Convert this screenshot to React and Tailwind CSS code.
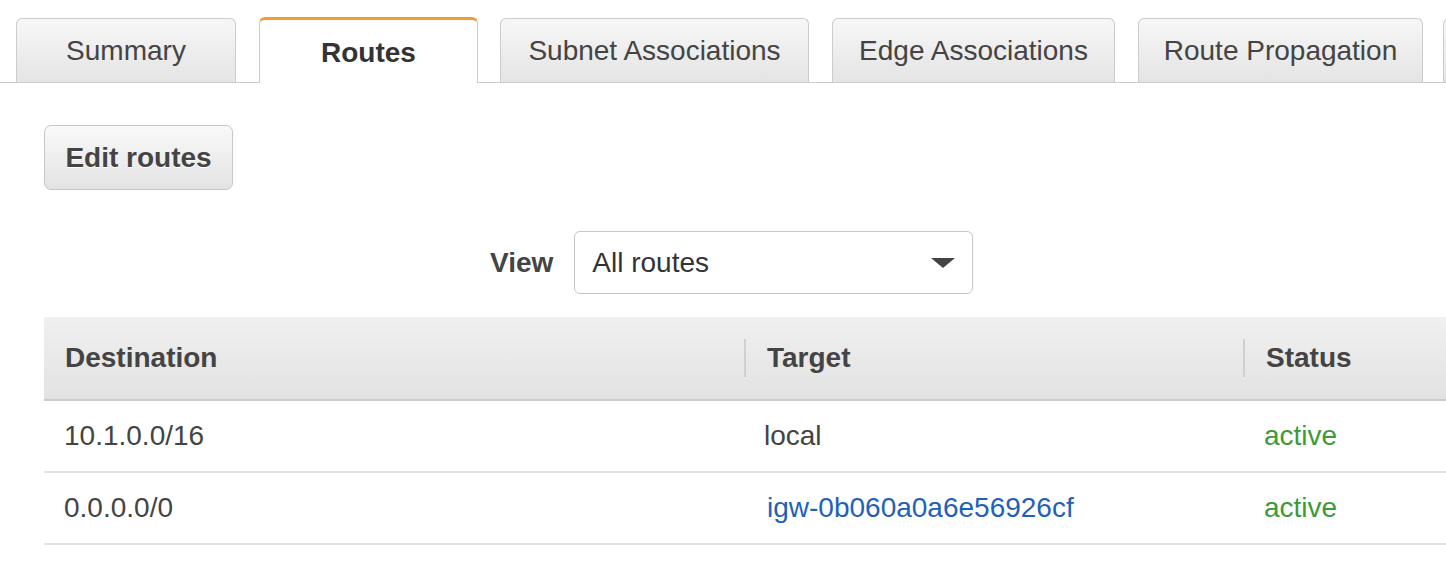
export default function App() {
  const font = { fontFamily: '"Liberation Sans", Arial, Helvetica, sans-serif' };
  const inactive =
    "h-[64px] flex items-center justify-center rounded-t-[6px] border border-[#cccccc] border-b-0 bg-gradient-to-b from-[#f7f7f7] to-[#e4e4e4] text-[28px] text-[#444444] shrink-0";
  return (
    <div className="w-[1446px] h-[562px] overflow-hidden bg-white" style={font}>
      <div className="flex items-end h-[83px] border-b border-[#cccccc] pl-[16px] gap-[23px]">
        <div className={inactive + " w-[220px]"}>Summary</div>
        <div className="h-[66px] -mb-px w-[219px] flex items-center justify-center rounded-t-[6px] border-x border-[#cccccc] border-t-[3px] border-t-[#f39c2f] bg-white text-[28px] font-bold text-[#333333] pt-[3px] shrink-0 -mr-px">
          Routes
        </div>
        <div className={inactive + " w-[309px]"}>Subnet Associations</div>
        <div className={inactive + " w-[283px]"}>Edge Associations</div>
        <div className={inactive + " w-[285px]"}>Route Propagation</div>
        <div className={inactive + " w-[100px] -ml-[3px]"}></div>
      </div>

      <div className="pl-[44px] pt-[42px]">
        <button className="w-[189px] h-[65px] rounded-[7px] border border-[#c6c6c6] bg-gradient-to-b from-[#f9f9f9] to-[#e3e3e3] text-[28px] font-bold text-[#444444] [text-shadow:0_1px_0_#ffffff]">
          Edit routes
        </button>
      </div>

      <div className="flex items-center pl-[490px] pt-[41px] gap-[21px]">
        <span className="text-[28px] font-bold text-[#444444]">View</span>
        <div className="w-[399px] h-[63px] rounded-[6px] border border-[#c6c6c6] bg-white flex items-center justify-between pl-[17px] pr-[17px]">
          <span className="text-[28px] text-[#333333]">All routes</span>
          <svg width="24" height="10" viewBox="0 0 24 10">
            <polygon points="0,0 24,0 12,10" fill="#444444" />
          </svg>
        </div>
      </div>

      <div className="ml-[44px] mt-[23px] w-[1500px]">
        <div className="flex h-[84px] bg-gradient-to-b from-[#f0f0f0] to-[#e2e2e2] border-b-2 border-[#cccccc] items-center text-[28px] font-bold text-[#444444]">
          <div className="w-[700px] pl-[21px]">Destination</div>
          <div className="w-[499px] flex items-center">
            <div className="w-[2px] h-[38px] bg-[#d0d0d0]"></div>
            <div className="pl-[21px]">Target</div>
          </div>
          <div className="flex-1 flex items-center">
            <div className="w-[2px] h-[38px] bg-[#d0d0d0]"></div>
            <div className="pl-[21px]">Status</div>
          </div>
        </div>
        <div className="flex h-[72px] border-b-2 border-[#e2e2e2] items-center text-[28px] text-[#444444]">
          <div className="w-[700px] pl-[20px]">10.1.0.0/16</div>
          <div className="w-[499px] pl-[20px]">local</div>
          <div className="flex-1 pl-[21px] text-[#3d9a37]">active</div>
        </div>
        <div className="flex h-[72px] border-b-2 border-[#e2e2e2] items-center text-[28px] text-[#444444]">
          <div className="w-[700px] pl-[20px]">0.0.0.0/0</div>
          <div className="w-[499px] pl-[23px] text-[#1e62b8]">igw-0b060a0a6e56926cf</div>
          <div className="flex-1 pl-[21px] text-[#3d9a37]">active</div>
        </div>
      </div>
    </div>
  );
}
